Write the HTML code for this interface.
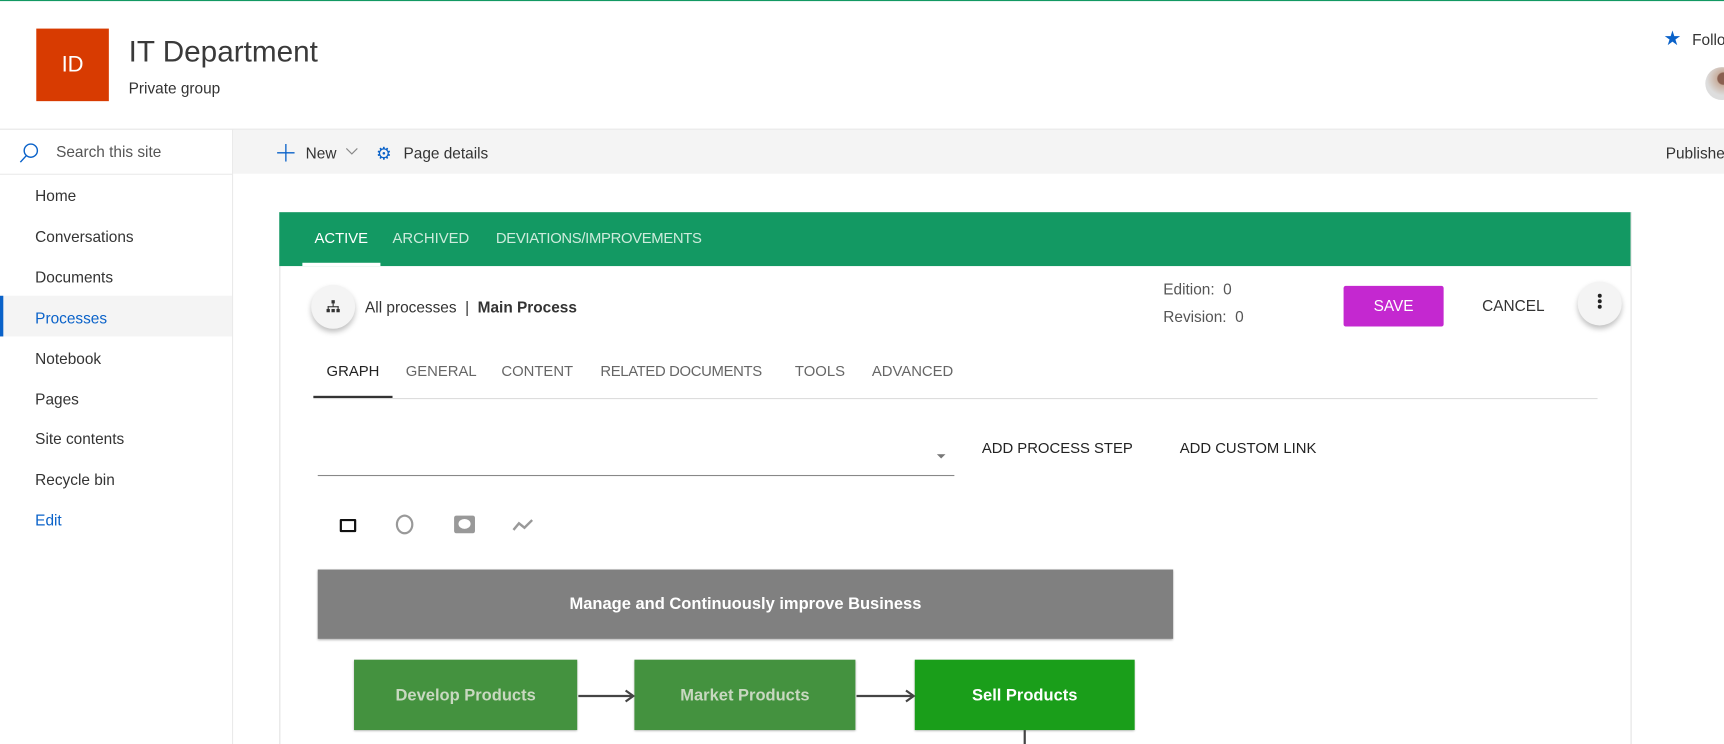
<!DOCTYPE html>
<html><head><meta charset="utf-8"><style>
html,body{margin:0;padding:0;width:1724px;height:744px;overflow:hidden;background:#fff}
#w{position:absolute;left:0;top:0;width:1568px;height:677px;overflow:hidden;transform:scale(1.09949);transform-origin:0 0;font-family:"Liberation Sans",sans-serif;color:#333}
.a{position:absolute;white-space:nowrap}
.nav{position:absolute;left:32px;font-size:14px;color:#333}
.t{position:absolute;font-size:14px;color:#555}
.tb{position:absolute;font-size:13.5px;color:#666;top:330px}
.box{position:absolute;display:flex;align-items:center;justify-content:center;font-weight:bold;font-size:15px;font-family:"Liberation Sans Narrow","Liberation Sans",sans-serif;box-shadow:0 1px 2px rgba(0,0,0,.3)}
</style></head><body><div id="w">
<div class="a" style="left:0;top:0;width:1568px;height:1px;background:#139963"></div>
<div class="a" style="left:33px;top:26px;width:66px;height:66px;background:#d83b01;color:#fff;font-size:20px;line-height:66px;text-align:center">ID</div>
<div class="a" style="left:117px;top:32px;font-size:27px;color:#3a3a3a">IT Department</div>
<div class="a" style="left:117px;top:72px;font-size:14px;color:#333">Private group</div>
<div class="a" style="left:1513px;top:25px;font-size:18px;color:#0a62c9">★</div>
<div class="a" style="left:1539px;top:28px;font-size:14px">Follo</div>
<div class="a" style="left:1551px;top:61px;width:30px;height:30px;border-radius:50%;background:radial-gradient(circle at 55% 35%,#8a6050 0 20%,#c9b0a0 24%,#ddd 60%)"></div>
<div class="a" style="left:0;top:117px;width:1568px;height:1px;background:#e5e5e5"></div>
<div class="a" style="left:212px;top:118px;width:1356px;height:40px;background:#f4f4f4"></div>
<div class="a" style="left:211px;top:118px;width:1px;height:559px;background:#eaeaea"></div>
<div class="a" style="left:0;top:158px;width:211px;height:1px;background:#eaeaea"></div>
<svg class="a" style="left:17px;top:129px" width="20" height="20" viewBox="0 0 20 20"><circle cx="11" cy="8" r="6" fill="none" stroke="#0a62c9" stroke-width="1.3"/><line x1="7" y1="12.5" x2="1.5" y2="18.5" stroke="#0a62c9" stroke-width="1.3"/></svg>
<div class="a" style="left:51px;top:130px;font-size:14px;color:#555">Search this site</div>
<svg class="a" style="left:252px;top:131px" width="16" height="16"><line x1="8" y1="0" x2="8" y2="16" stroke="#0a62c9" stroke-width="1.2"/><line x1="0" y1="8" x2="16" y2="8" stroke="#0a62c9" stroke-width="1.2"/></svg>
<div class="a" style="left:278px;top:131px;font-size:14px">New</div>
<svg class="a" style="left:314px;top:134px" width="12" height="8"><polyline points="1,1 6,6 11,1" fill="none" stroke="#888"/></svg>
<div class="a" style="left:342px;top:130px;font-size:16px;color:#0a62c9">⚙</div>
<div class="a" style="left:367px;top:131px;font-size:14px">Page details</div>
<div class="a" style="left:1515px;top:131px;font-size:14px">Publishe</div>
<div class="nav" style="top:170px">Home</div>
<div class="nav" style="top:207px">Conversations</div>
<div class="nav" style="top:244px">Documents</div>
<div class="a" style="left:0;top:269px;width:211px;height:37px;background:#f4f4f4"></div>
<div class="a" style="left:0;top:269px;width:3px;height:37px;background:#0a62c9"></div>
<div class="nav" style="top:281px;color:#0a62c9">Processes</div>
<div class="nav" style="top:318px">Notebook</div>
<div class="nav" style="top:355px">Pages</div>
<div class="nav" style="top:391px">Site contents</div>
<div class="nav" style="top:428px">Recycle bin</div>
<div class="nav" style="top:465px;color:#0a62c9">Edit</div>
<div class="a" style="left:254px;top:193px;width:1228px;height:484px;border:1px solid #e3e3e3;border-bottom:none"></div>
<div class="a" style="left:254px;top:193px;width:1229px;height:49px;background:#139963"></div>
<div class="a" style="left:286px;top:209px;font-size:13.5px;color:#fff">ACTIVE</div>
<div class="a" style="left:275px;top:239px;width:71px;height:3px;background:#fff"></div>
<div class="a" style="left:357px;top:209px;font-size:13.5px;color:#cdebdc">ARCHIVED</div>
<div class="a" style="left:451px;top:209px;font-size:13.5px;color:#cdebdc;letter-spacing:-0.3px">DEVIATIONS/IMPROVEMENTS</div>
<div class="a" style="left:283px;top:259px;width:40px;height:40px;border-radius:50%;background:#f4f4f4;box-shadow:0 3px 5px rgba(0,0,0,.25)"></div>
<svg class="a" style="left:296px;top:272px" width="14" height="14" viewBox="0 0 14 14" fill="#333"><rect x="5.5" y="1" width="3" height="3"/><rect x="6.5" y="4" width="1" height="3"/><rect x="2" y="6.5" width="10" height="1"/><rect x="2" y="6.5" width="1" height="3"/><rect x="11" y="6.5" width="1" height="3"/><rect x="1" y="9" width="3" height="3"/><rect x="5.5" y="9" width="3" height="3"/><rect x="10" y="9" width="3" height="3"/></svg>
<div class="a" style="left:332px;top:271px;font-size:14px">All processes &nbsp;| &nbsp;<b>Main Process</b></div>
<div class="t" style="left:1058px;top:255px">Edition: &nbsp;0</div>
<div class="t" style="left:1058px;top:280px">Revision: &nbsp;0</div>
<div class="a" style="left:1222px;top:260px;width:91px;height:37px;background:#c428d0;border-radius:2px;color:#fff;font-size:14px;line-height:37px;text-align:center">SAVE</div>
<div class="a" style="left:1348px;top:270px;font-size:14px">CANCEL</div>
<div class="a" style="left:1435px;top:256px;width:40px;height:40px;border-radius:50%;background:#f4f4f4;box-shadow:0 3px 5px rgba(0,0,0,.25)"></div>
<svg class="a" style="left:1452px;top:266px" width="6" height="16" fill="#222"><circle cx="3" cy="3" r="1.8"/><circle cx="3" cy="8" r="1.8"/><circle cx="3" cy="13" r="1.8"/></svg>
<div class="tb" style="left:297px;color:#222">GRAPH</div>
<div class="tb" style="left:369px">GENERAL</div>
<div class="tb" style="left:456px">CONTENT</div>
<div class="tb" style="left:546px;letter-spacing:-0.3px">RELATED DOCUMENTS</div>
<div class="tb" style="left:723px">TOOLS</div>
<div class="tb" style="left:793px">ADVANCED</div>
<div class="a" style="left:285px;top:362px;width:1168px;height:1px;background:#ddd"></div>
<div class="a" style="left:285px;top:360px;width:72px;height:2px;background:#333"></div>
<div class="a" style="left:289px;top:432px;width:579px;height:1px;background:#888"></div>
<svg class="a" style="left:852px;top:413px" width="8" height="4"><polygon points="0,0 8,0 4,4" fill="#777"/></svg>
<div class="a" style="left:893px;top:400px;font-size:13.5px;color:#222">ADD PROCESS STEP</div>
<div class="a" style="left:1073px;top:400px;font-size:13.5px;color:#222">ADD CUSTOM LINK</div>
<div class="a" style="left:309px;top:472px;width:11px;height:8px;border:2px solid #111;border-radius:1px"></div>
<div class="a" style="left:360px;top:468px;width:16px;height:18px;border:2px solid #999;border-radius:50%;box-sizing:border-box"></div>
<div class="a" style="left:413px;top:469px;width:19px;height:16px;background:#999;border-radius:2px"></div>
<div class="a" style="left:417px;top:472px;width:11px;height:9px;background:#fff;border-radius:50%"></div>
<svg class="a" style="left:466px;top:470px" width="20" height="14"><polyline points="1,12 6,6 11,10 18,3" fill="none" stroke="#999" stroke-width="2.2"/></svg>
<div class="box" style="left:289px;top:518px;width:778px;height:63px;background:#808080;color:#fff">Manage and Continuously improve Business</div>
<div class="box" style="left:322px;top:600px;width:203px;height:64px;background:#44923f;color:#c8d8c0">Develop Products</div>
<div class="box" style="left:577px;top:600px;width:201px;height:64px;background:#44923f;color:#c8d8c0">Market Products</div>
<div class="box" style="left:832px;top:600px;width:200px;height:64px;background:#1a9e1a;color:#fff">Sell Products</div>
<svg class="a" style="left:525px;top:626px" width="310" height="14"><line x1="1" y1="7" x2="50" y2="7" stroke="#444" stroke-width="2"/><polyline points="44,2 51,7 44,12" fill="none" stroke="#444" stroke-width="2"/><line x1="254" y1="7" x2="305" y2="7" stroke="#444" stroke-width="2"/><polyline points="299,2 306,7 299,12" fill="none" stroke="#444" stroke-width="2"/></svg>
<div class="a" style="left:931px;top:664px;width:2px;height:13px;background:#444"></div>
</div></body></html>
